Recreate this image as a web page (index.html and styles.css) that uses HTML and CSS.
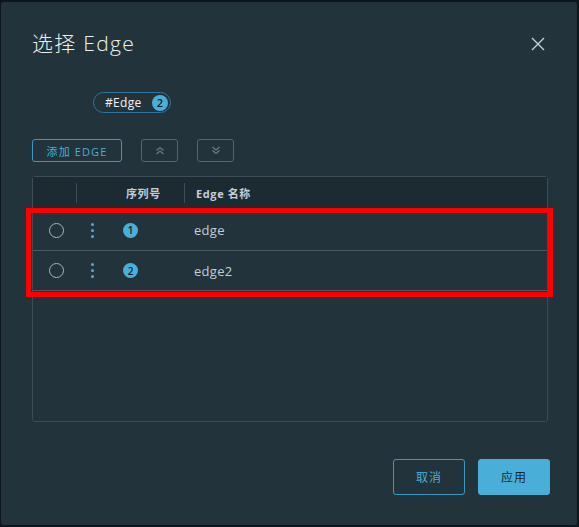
FILE: index.html
```html
<!DOCTYPE html>
<html lang="zh">
<head>
<meta charset="utf-8">
<title>选择 Edge</title>
<link rel="stylesheet" href="styles.css">
</head>
<body>
<div class="dialog">
  <div class="head">
    <h1 class="title">选择 Edge</h1>
    <button class="close" aria-label="关闭">
      <svg width="14" height="14" viewBox="0 0 14 14"><path d="M1 1L13 13M13 1L1 13" stroke="#c7d1d6" stroke-width="1.4" fill="none"/></svg>
    </button>
  </div>

  <div class="tagrow">
    <span class="tag">#Edge <span class="tagbadge">2</span></span>
  </div>

  <div class="toolbar">
    <button class="btn-add">添加 EDGE</button>
    <button class="btn-icon" aria-label="上移">
      <svg width="10" height="9" viewBox="0 0 10 9"><path d="M1.5 4.5L5 1.5L8.5 4.5M1.5 8L5 5L8.5 8" stroke="#687a84" stroke-width="1.3" fill="none"/></svg>
    </button>
    <button class="btn-icon" aria-label="下移">
      <svg width="10" height="9" viewBox="0 0 10 9"><path d="M1.5 1L5 4L8.5 1M1.5 4.5L5 7.5L8.5 4.5" stroke="#687a84" stroke-width="1.3" fill="none"/></svg>
    </button>
  </div>

  <div class="grid">
    <div class="ghead">
      <div class="hc"></div>
      <div class="hc sep"></div>
      <div class="hc"><span class="htext">序列号</span></div>
      <div class="hc sep"><span class="htext name">Edge 名称</span></div>
    </div>
    <div class="grow">
      <div class="c"><span class="radio"></span></div>
      <div class="c"><span class="dots"><i></i><i></i><i></i></span></div>
      <div class="c"><span class="num">1</span></div>
      <div class="c name-cell">edge</div>
    </div>
    <div class="grow">
      <div class="c"><span class="radio"></span></div>
      <div class="c"><span class="dots"><i></i><i></i><i></i></span></div>
      <div class="c"><span class="num">2</span></div>
      <div class="c name-cell">edge2</div>
    </div>
  </div>

  <div class="footer">
    <button class="btn-cancel">取消</button>
    <button class="btn-apply">应用</button>
  </div>
</div>
<div class="highlight"></div>
</body>
</html>
```
FILE: styles.css
```css
html, body {
  margin: 0;
  padding: 0;
}
body {
  background: #0c161b;
  width: 579px;
  height: 527px;
  overflow: hidden;
  font-family: "Open Sans", "Noto Sans CJK SC", sans-serif;
  position: relative;
}
button {
  font-family: inherit;
  cursor: pointer;
  padding: 0;
  margin: 0;
}
.dialog {
  box-sizing: border-box;
  margin: 2px 0 0 1px;
  width: 576px;
  height: 523px;
  background: #22333b;
  border-radius: 3px;
  padding: 27px 29px 30px 31px;
  display: flex;
  flex-direction: column;
}
.head {
  display: flex;
  align-items: center;
  justify-content: space-between;
  height: 28px;
}
.title {
  margin: 0;
  font-size: 21px;
  font-weight: 300;
  line-height: 28px;
  color: #eef1f3;
  letter-spacing: 1.3px;
}
.close {
  background: none;
  border: none;
  width: 16px;
  height: 16px;
  display: flex;
  align-items: center;
  justify-content: center;
  margin-top: 2px;
  margin-right: 2px;
}
.tagrow {
  margin-top: 35px;
  padding-left: 61px;
  display: flex;
}
.tag {
  box-sizing: border-box;
  height: 21px;
  width: 78px;
  border: 1px solid #2d76a0;
  border-radius: 11px;
  display: flex;
  align-items: center;
  padding-left: 11px;
  font-size: 12px;
  color: #f2f4f5;
  white-space: pre;
  letter-spacing: 0.3px;
}
.tagbadge {
  width: 16px;
  height: 16px;
  border-radius: 50%;
  background: #49afd9;
  color: #102029;
  font-size: 11px;
  font-weight: 600;
  display: flex;
  align-items: center;
  justify-content: center;
  margin-left: auto;
  margin-right: 2px;
}
.toolbar {
  margin-top: 26px;
  display: flex;
  gap: 19px;
  height: 23px;
}
.btn-add {
  box-sizing: border-box;
  width: 90px;
  height: 23px;
  border: 1px solid #3a98c4;
  border-radius: 3px;
  background: transparent;
  color: #49afd9;
  font-size: 11px;
  letter-spacing: 1.1px;
}
.btn-icon {
  box-sizing: border-box;
  width: 37px;
  height: 23px;
  border: 1px solid #55656e;
  border-radius: 3px;
  background: transparent;
  display: flex;
  align-items: center;
  justify-content: center;
}
.grid {
  box-sizing: border-box;
  margin-top: 14px;
  height: 246px;
  border: 1px solid #3c4c55;
  border-radius: 3px;
  background: #22333b;
}
.ghead, .grow {
  display: grid;
  grid-template-columns: 43px 36px 72px 1fr;
}
.ghead {
  height: 32px;
  background: #1c2a32;
  border-bottom: 1px solid #3c4c55;
}
.hc {
  display: flex;
  align-items: center;
  position: relative;
}
.hc.sep::before {
  content: "";
  position: absolute;
  left: 0;
  top: 6px;
  bottom: 6px;
  width: 1px;
  background: #3d4d56;
}
.htext {
  font-size: 11px;
  font-weight: 700;
  color: #c5d0d6;
  padding-left: 14px;
  letter-spacing: 0.6px;
}
.htext.name {
  padding-left: 12px;
}
.grow {
  height: 40px;
  border-bottom: 1px solid #4a5b64;
}
.grow:last-child {
  height: 39px;
}
.c {
  display: flex;
  align-items: center;
}
.radio {
  box-sizing: border-box;
  width: 15px;
  height: 15px;
  border: 1px solid #a8b5bc;
  border-radius: 50%;
  margin-left: 16px;
}
.dots {
  display: flex;
  flex-direction: column;
  gap: 3px;
  margin-left: 15px;
}
.dots i {
  display: block;
  width: 3px;
  height: 3px;
  border-radius: 50%;
  background: #49afd9;
}
.num {
  width: 15px;
  height: 15px;
  border-radius: 50%;
  background: #49afd9;
  color: #102029;
  font-size: 10px;
  font-weight: 600;
  display: flex;
  align-items: center;
  justify-content: center;
  margin-left: 11px;
}
.name-cell {
  padding-left: 10px;
  font-size: 13px;
  color: #c3ced4;
  letter-spacing: 0.3px;
}
.footer {
  margin-top: auto;
  margin-right: -2px;
  display: flex;
  justify-content: flex-end;
  gap: 13px;
}
.btn-cancel, .btn-apply {
  box-sizing: border-box;
  width: 72px;
  height: 36px;
  border-radius: 3px;
  font-size: 12px;
  letter-spacing: 1px;
}
.btn-cancel {
  background: transparent;
  border: 1px solid #3a98c4;
  color: #49afd9;
}
.btn-apply {
  background: #49afd9;
  border: 1px solid #49afd9;
  color: #142630;
}
.highlight {
  position: absolute;
  left: 26px;
  top: 208px;
  width: 527px;
  height: 89px;
  box-sizing: border-box;
  border: 5px solid #ff0000;
  pointer-events: none;
}
```
